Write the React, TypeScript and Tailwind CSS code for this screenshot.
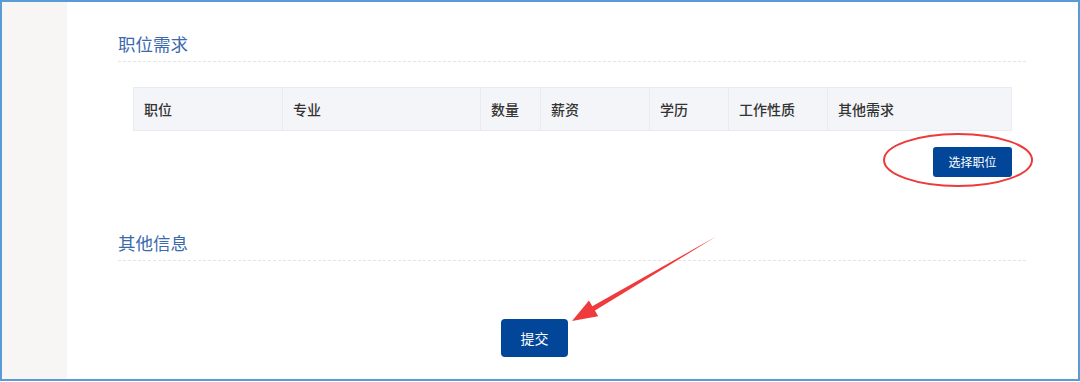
const columns = ["职位", "专业", "数量", "薪资", "学历", "工作性质", "其他需求"];

const SectionTitle = ({ title }: { title: string }) => (
  <div>
    <h2 className="text-[17.5px] leading-[24px] text-[#3b69ad]">{title}</h2>
    <div className="mt-[5px] h-px bg-[repeating-linear-gradient(to_right,#e4e4e4_0_3px,transparent_3px_5px)]" />
  </div>
);

const App = () => {
  return (
    <div
      className="relative h-[381px] w-full border-2 border-[#5b9bd5] bg-white flex"
      style={{ fontFamily: '"Noto Sans CJK SC", "Noto Sans", sans-serif' }}
    >
      <aside className="w-[65px] shrink-0 bg-[#f7f6f4]" />
      <main className="flex-1 px-[51px] pt-[30px]">
        <SectionTitle title="职位需求" />

        <div className="mx-[15px] mt-[25px]">
          <div className="grid h-[44px] grid-cols-[148px_198px_60px_109px_79px_99px_1fr] border border-[#e9ebf0] bg-[#f4f5f9]">
            {columns.map((col, i) => (
              <div
                key={col}
                className={
                  "flex items-center pl-[10px] text-[14px] font-medium text-[#333] " +
                  (i > 0 ? "border-l border-[#e9ebf0]" : "")
                }
              >
                {col}
              </div>
            ))}
          </div>
          <div className="mt-[16px] flex justify-end">
            <button className="h-[30px] w-[79px] rounded-[3px] bg-[#02469a] text-[12px] text-white">
              选择职位
            </button>
          </div>
        </div>

        <div className="mt-[54px]">
          <SectionTitle title="其他信息" />
        </div>

        <button className="ml-[383px] mt-[58px] flex h-[38px] w-[67px] items-center justify-center rounded-[4px] bg-[#02469a] text-[14px] text-white">
          提交
        </button>
      </main>

      {/* annotations drawn over the screenshot */}
      <svg
        className="pointer-events-none absolute left-[-2px] top-[-2px]"
        width="1080"
        height="382"
        viewBox="0 0 1080 382"
      >
        <ellipse cx="958" cy="160" rx="74" ry="26" fill="none" stroke="#ec3b3b" strokeWidth="2" />
        <polygon
          points="717,236 594.9,310.6 598.2,316.2 572,321 589,300.6 592.3,306.2"
          fill="#ef3b3b"
        />
      </svg>
    </div>
  );
};

export default App;
